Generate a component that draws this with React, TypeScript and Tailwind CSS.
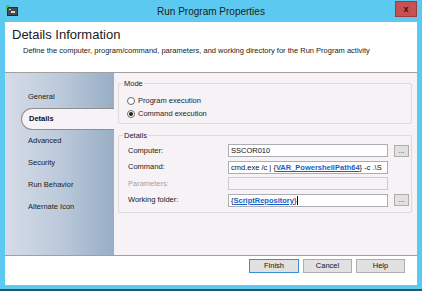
import React from 'react';

const font = "font-['Liberation_Sans',Arial,sans-serif]";

const tabs = ['General', 'Details', 'Advanced', 'Security', 'Run Behavior', 'Alternate Icon'];

const Radio = ({ checked, label }: { checked?: boolean; label: string }) => (
  <div className="flex items-center h-[13px]">
    <span className="w-[8px] h-[8px] rounded-full border border-[#6b6b6b] bg-white flex items-center justify-center">
      {checked && <span className="w-[4px] h-[4px] rounded-full bg-[#1e1e1e]" />}
    </span>
    <span className="ml-[3px] text-[7.5px] text-[#1e1e1e]">{label}</span>
  </div>
);

const Browse = () => (
  <button className="w-[15px] h-[12px] bg-[#e1e1e1] border border-[#adadad] text-[7px] leading-[8px] text-[#333] flex items-end justify-center pb-[1px]">
    ...
  </button>
);

const App = () => {
  return (
    <div className={`w-[422px] h-[291px] bg-[#5ccaf0] flex flex-col border-b-[2px] border-[#24566a] ${font}`}>
      {/* title bar */}
      <div className="relative h-[22px] flex items-center justify-center shrink-0">
        <svg className="absolute left-[6px] top-[5px]" width="12" height="11" viewBox="0 0 12 11">
          <rect x="1" y="2" width="11" height="9" fill="#2b2b2b" />
          <rect x="2" y="3" width="9" height="7" fill="#4a4a4a" />
          <rect x="5" y="6" width="4" height="2" fill="#d8d8d8" />
          <rect x="3" y="4" width="2" height="1" fill="#d8d8d8" />
          <polygon points="0,0 4,0 0,5" fill="#4ec13a" />
        </svg>
        <span className="text-[10px] text-[#1b1b1b]">Run Program Properties</span>
        <div className="absolute right-[5px] top-[1px] w-[22px] h-[16px] bg-[#c75050] border border-[#a33a3a] flex items-center justify-center">
          <span className="text-[9px] font-bold text-[#1a1a1a] leading-none">x</span>
        </div>
      </div>

      {/* client */}
      <div className="mx-[5px] flex-1 flex flex-col bg-white mb-[4px]">
        <div className="h-[51px] shrink-0 border-b border-[#a0a0a0] px-[7px] pt-[5px]">
          <div className="text-[13px] leading-[15px] text-[#1a1a1a]">Details Information</div>
          <div className="ml-[11px] mt-[4px] text-[7.5px] leading-[10px] text-[#1a1a1a]">
            Define the computer, program/command, parameters, and working directory for the Run Program activity
          </div>
        </div>

        <div className="flex-1 flex bg-[#f6f2f6]">
          {/* sidebar */}
          <div className="w-[109px] shrink-0 bg-gradient-to-r from-[#d6dce8] via-[#bccadb] to-[#98aec5] pt-[13px]">
            {tabs.map((t) =>
              t === 'Details' ? (
                <div
                  key={t}
                  className="ml-[16px] h-[22px] flex items-center pl-[7px] rounded-l-[11px] border border-r-0 border-[#8f8f8f] bg-[#f6f2f6] text-[7.5px] font-bold text-[#111]"
                >
                  {t}
                </div>
              ) : (
                <div key={t} className="h-[22px] flex items-center pl-[23px] text-[7.5px] text-[#1a1a1a]">
                  {t}
                </div>
              )
            )}
          </div>

          {/* content */}
          <div className="flex-1 pl-[4px] pr-[5px] pt-[6px] flex flex-col gap-[7px]">
            <fieldset className="border border-[#dcdcdc] rounded-[2px] h-[45px] pl-[8px]">
              <legend className="ml-[-4px] px-[1px] text-[7.5px] text-[#1a1a1a] leading-[9px]">Mode</legend>
              <div className="flex flex-col mt-[6px]">
                <Radio label="Program execution" />
                <Radio checked label="Command execution" />
              </div>
            </fieldset>

            <fieldset className="border border-[#dcdcdc] rounded-[2px] h-[82px] pl-[9px]">
              <legend className="ml-[-5px] px-[1px] text-[7.5px] text-[#1a1a1a] leading-[9px]">Details</legend>
              <div className="grid grid-cols-[94px_160px_15px] gap-x-[6px] gap-y-[3.5px] items-center mt-[4px]">
                <span className="text-[7.5px] text-[#1a1a1a]">Computer:</span>
                <div className="h-[13px] bg-white border border-[#abadb3] px-[2px] text-[7.5px] leading-[11px] text-[#111]">
                  SSCOR010
                </div>
                <Browse />

                <span className="text-[7.5px] text-[#1a1a1a]">Command:</span>
                <div className="h-[13px] bg-white border border-[#abadb3] px-[2px] text-[7.5px] leading-[11px] text-[#111] whitespace-nowrap overflow-hidden">
                  cmd.exe /c | {'{'}
                  <span className="text-[#1560c8] font-bold underline">VAR_PowershellPath64</span>
                  {'}'} -c .\S
                </div>
                <span />

                <span className="text-[7.5px] text-[#a3a3a3]">Parameters:</span>
                <div className="h-[13px] bg-[#f6f2f6] border border-[#c3cdda]" />
                <span />

                <span className="text-[7.5px] text-[#1a1a1a]">Working folder:</span>
                <div className="h-[13px] bg-white border border-[#abadb3] px-[2px] text-[7.5px] leading-[11px] text-[#111] whitespace-nowrap flex items-center">
                  {'{'}
                  <span className="text-[#1560c8] font-bold underline">ScriptRepository</span>
                  {'}'}
                  <span className="w-[1px] h-[9px] bg-black ml-[1px]" />
                </div>
                <Browse />
              </div>
            </fieldset>
          </div>
        </div>

        {/* footer */}
        <div className="h-[30px] shrink-0 border-t border-[#a0a0a0] flex items-start justify-end gap-[4px] pt-[3px] pr-[12px]">
          <button className="w-[50px] h-[14px] bg-[#e1e1e1] border border-[#3c8fd6] text-[7.5px] text-[#111]">Finish</button>
          <button className="w-[49px] h-[14px] bg-[#e1e1e1] border border-[#adadad] text-[7.5px] text-[#111]">Cancel</button>
          <button className="w-[49px] h-[14px] bg-[#e1e1e1] border border-[#adadad] text-[7.5px] text-[#111]">Help</button>
        </div>
      </div>
    </div>
  );
};

export default App;
